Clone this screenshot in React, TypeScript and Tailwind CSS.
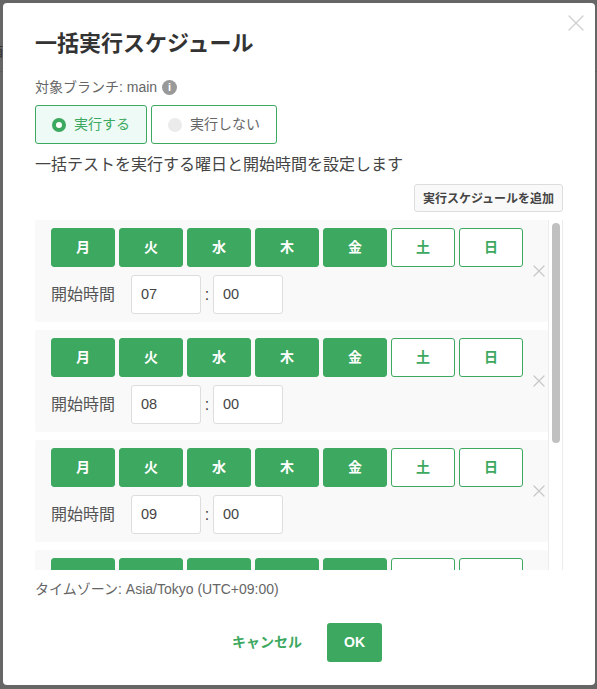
import { X } from 'lucide-react';

const DAYS = ['月', '火', '水', '木', '金', '土', '日'];
const HOURS = ['07', '08', '09', '10'];
const FONT = "font-['Liberation_Sans','Noto_Sans_CJK_JP',sans-serif]";

function ScheduleRow({ hour }: { hour: string }) {
  return (
    <div className="relative h-[102px] w-[513px] shrink-0 rounded-[2px] bg-[#f9f9f9] pl-4 pt-2">
      <div className="flex gap-1">
        {DAYS.map((day, i) => (
          <div
            key={day}
            className={
              i < 5
                ? 'flex h-[39px] w-[64px] items-center justify-center rounded-[3px] border border-[#3ca860] bg-[#3ca860] text-[14px] font-bold text-white'
                : 'flex h-[39px] w-[64px] items-center justify-center rounded-[3px] border border-[#3ca860] bg-white text-[14px] font-bold text-[#3ca860]'
            }
          >
            {day}
          </div>
        ))}
      </div>
      <div className="mt-2 flex items-center">
        <span className="w-[80px] pt-px text-[16px] text-[#555]">開始時間</span>
        <div className="flex h-[39px] w-[70px] items-center rounded-[3px] border border-[#ddd] bg-white pl-[9px] pt-px text-[14.5px] text-[#444]">{hour}</div>
        <span className="w-[12px] text-center text-[16px] text-[#444]">:</span>
        <div className="flex h-[39px] w-[70px] items-center rounded-[3px] border border-[#ddd] bg-white pl-[9px] pt-px text-[14.5px] text-[#444]">00</div>
      </div>
      <X className="absolute right-[-1px] top-[41px] h-[20px] w-[20px] text-[#c8c8c8]" strokeWidth={1.5} />
    </div>
  );
}

export default function App() {
  return (
    <div className={`relative h-[689px] w-[597px] overflow-hidden bg-[#666] pl-[3px] pt-[3px] ${FONT}`}>
      <div className="absolute left-0 top-[71px] h-px w-full bg-[#5c5c5c]" />
      <span className="absolute left-[-11px] top-[41px] text-[14px] text-[#333]">箱</span>
      <div className="relative h-[682px] w-[592px] rounded-[4px] bg-white px-8">
        <X className="absolute right-[5px] top-[6px] h-[28px] w-[28px] text-[#d0d0d0]" strokeWidth={1.2} />
        <h1 className="pt-[26px] text-[22px] font-bold leading-[30px] text-[#333]">一括実行スケジュール</h1>
        <div className="mt-[18px] flex h-[20px] items-center gap-[5px] text-[14px] text-[#666]">
          <span>対象ブランチ: main</span>
          <span className="flex h-[15px] w-[15px] items-center justify-center rounded-full bg-[#999] text-[11px] font-bold leading-none text-white">i</span>
        </div>
        <div className="mt-[8px] flex gap-1">
          <div className="flex h-[39px] w-[112px] items-center justify-center gap-2 rounded-[3px] border border-[#3ca860] bg-[#eefaf5] text-[14px] text-[#3ca860]">
            <span className="h-[14px] w-[14px] rounded-full border-[4px] border-[#3ca860] bg-white" />
            実行する
          </div>
          <div className="flex h-[39px] w-[126px] items-center justify-center gap-2 rounded-[3px] border border-[#3ca860] bg-white text-[14px] text-[#666]">
            <span className="h-[14px] w-[14px] rounded-full bg-[#ebebeb]" />
            実行しない
          </div>
        </div>
        <p className="mt-[9px] text-[16px] leading-[24px] text-[#444]">一括テストを実行する曜日と開始時間を設定します</p>
        <div className="mt-[7px] flex w-[528px] justify-end">
          <div className="flex h-[28px] w-[149px] items-center justify-center rounded-[3px] border border-[#ddd] bg-[#f9f9f9] pt-px text-[12px] font-bold text-[#444]">
            実行スケジュールを追加
          </div>
        </div>
        <div className="relative mt-[8px] h-[350px] w-[528px] overflow-hidden">
          <div className="flex flex-col gap-2">
            {HOURS.map((hour) => (
              <ScheduleRow key={hour} hour={hour} />
            ))}
          </div>
          <div className="absolute bottom-0 right-0 top-0 w-[15px] border-x border-[#ececec] bg-white">
            <div className="ml-[3px] mt-[3px] h-[220px] w-[8px] rounded-[4px] bg-[#c0c0c0]" />
          </div>
        </div>
        <p className="mt-[9px] text-[14px] leading-[20px] text-[#666]">タイムゾーン: Asia/Tokyo (UTC+09:00)</p>
        <div className="mt-[24px] flex w-[347px] items-center justify-end gap-[25px]">
          <span className="text-[14px] font-bold text-[#3ca860]">キャンセル</span>
          <div className="flex h-[39px] w-[55px] items-center justify-center rounded-[3px] bg-[#3ca860] text-[14px] font-bold text-white">OK</div>
        </div>
      </div>
    </div>
  );
}
